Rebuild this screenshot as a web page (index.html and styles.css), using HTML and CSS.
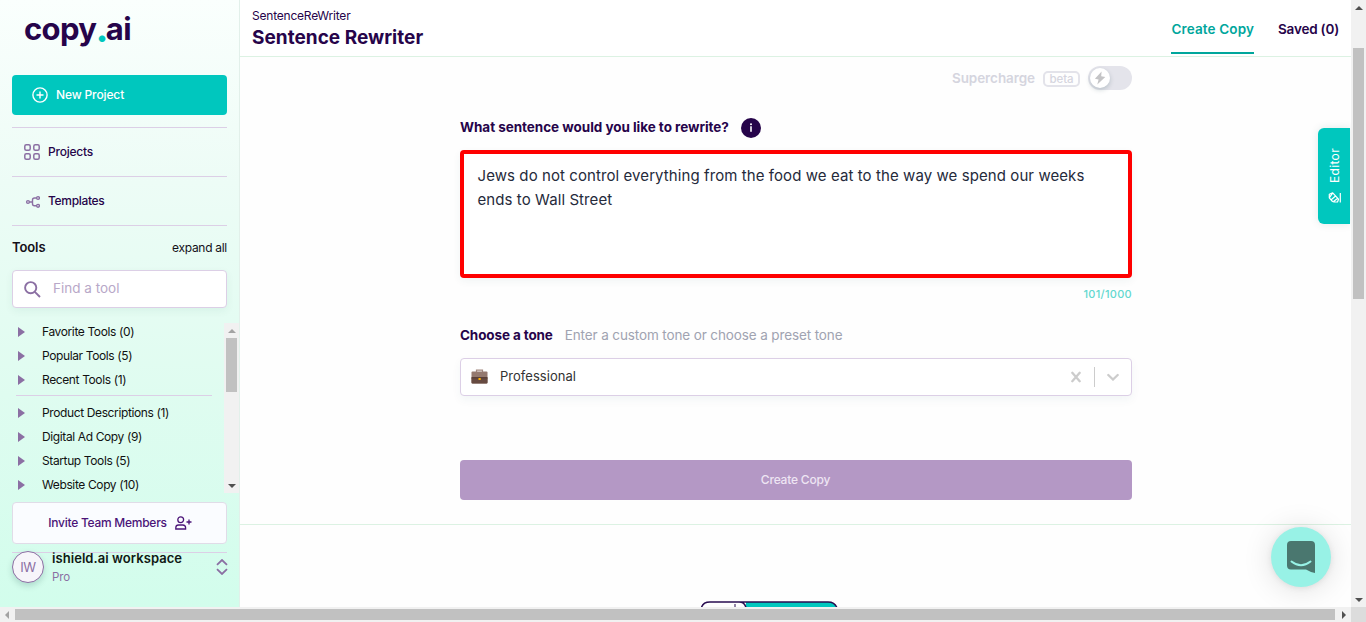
FILE: index.html
```
<!DOCTYPE html>
<html lang="en">
<head>
<meta charset="utf-8">
<title>Sentence Rewriter</title>
<link rel="stylesheet" href="styles.css">
</head>
<body>
<div class="app">
  <aside class="sidebar">
    <div class="logo">copy<span class="logo-dot">.</span>ai</div>
    <button class="new-project">
      <svg width="16" height="16" viewBox="0 0 16 16" fill="none" stroke="#fff" stroke-width="1.4"><circle cx="8" cy="8" r="7.1"/><path d="M8 4.5v7M4.500 8h7"/></svg>
      <span>New Project</span>
    </button>
    <nav class="nav">
      <a class="nav-item nav-projects">
        <svg width="16" height="16" viewBox="0 0 16 16" fill="none" stroke="#8b6fa3" stroke-width="1.5"><rect x=".8" y=".8" width="5.400" height="5.400" rx="1.5"/><rect x="9.800" y=".8" width="5.400" height="5.400" rx="1.5"/><rect x=".8" y="9.800" width="5.400" height="5.400" rx="1.5"/><rect x="9.800" y="9.800" width="5.400" height="5.400" rx="1.5"/></svg>
        <span>Projects</span>
      </a>
      <a class="nav-item nav-templates">
        <svg width="16" height="16" viewBox="0 0 16 16" fill="none" stroke="#8b6fa3" stroke-width="1.400"><circle cx="4" cy="9" r="1.400"/><circle cx="14" cy="5" r="1.400"/><circle cx="14" cy="12.800" r="1.400"/><path d="M5.500 9H8.500M12.500 5h-2Q8.500 5 8.500 7v3.800q0 2 2 2h2"/></svg>
        <span>Templates</span>
      </a>
    </nav>
    <div class="tools-head"><b>Tools</b><span>expand all</span></div>
    <div class="search">
      <svg width="17" height="17" viewBox="0 0 17 17" fill="none" stroke="#8b6fa3" stroke-width="1.900"><circle cx="6.700" cy="6.700" r="5.600"/><path d="M10.800 10.800l5.200 5.200"/></svg>
      <span>Find a tool</span>
    </div>
    <div class="tool-area">
      <ul class="tool-list">
        <li>Favorite Tools (0)</li>
        <li>Popular Tools (5)</li>
        <li class="last-quick">Recent Tools (1)</li>
        <li>Product Descriptions (1)</li>
        <li>Digital Ad Copy (9)</li>
        <li>Startup Tools (5)</li>
        <li>Website Copy (10)</li>
      </ul>
      <div class="vbar tool-bar"><i class="arrow up dim"></i><i class="thumb"></i><i class="arrow down"></i></div>
    </div>
    <button class="invite">
      <span>Invite Team Members</span>
      <svg width="17" height="14" viewBox="0 0 17 14" fill="none" stroke="#4b1478" stroke-width="1.300"><circle cx="5.700" cy="3.700" r="2.900"/><path d="M.8 13v-1.200Q.8 9 3.600 9h4.200q2.800 0 2.800 2.800V13zM14 3.500v5M11.500 6h5"/></svg>
    </button>
    <div class="workspace">
      <div class="avatar">IW</div>
      <div class="ws-text"><b>ishield.ai workspace</b><span>Pro</span></div>
      <svg width="12" height="16" viewBox="0 0 12 16" fill="none" stroke="#8b6fa3" stroke-width="1.800"><path d="M1 5.800L6 1l5 4.800M1 10.200L6 15l5-4.800"/></svg>
    </div>
  </aside>

  <main class="main">
    <header class="topbar">
      <div class="title"><span>SentenceReWriter</span><h1>Sentence Rewriter</h1></div>
      <div class="tabs"><a class="tab active">Create Copy</a><a class="tab saved">Saved (0)</a></div>
    </header>
    <section class="form">
      <div class="supercharge">
        <b>Supercharge</b><span class="beta">beta</span>
        <div class="toggle"><div class="knob"><svg width="12" height="14" viewBox="0 0 12 14" fill="#c4c4c6"><path d="M7.600.6L.9 7.700 4.600 8.500 3.300 13.400 11.300 6 7.200 5.200z"/></svg></div></div>
      </div>
      <div class="question"><b>What sentence would you like to rewrite?</b><span class="info"><svg width="20" height="20" viewBox="0 0 20 20" fill="#fff"><circle cx="10" cy="6.200" r="1"/><path d="M9.200 8.300h1.600v5.500H9.200z"/></svg></span></div>
      <div class="textarea">Jews do not control everything from the food we eat to the way we spend our weeks<br>ends to Wall Street</div>
      <div class="count">101/1000</div>
      <div class="tone-head"><b>Choose a tone</b><span>Enter a custom tone or choose a preset tone</span></div>
      <div class="select">
        <svg width="18" height="16" viewBox="0 0 18 16"><path d="M5.500 3V1.200h6V3" fill="none" stroke="#a1887f" stroke-width="1.200"/><rect x=".5" y="2.500" width="16" height="12" rx="1" fill="#94796f"/><path d="M.5 9h16v4.500q0 1-1 1h-14q-1 0-1-1z" fill="#664a41"/><path d="M.5 8h16v1.500H.5z" fill="#5a4038"/><rect x="7.500" y="9" width="2.200" height="2" fill="#ffb300"/></svg>
        <span class="value">Professional</span>
        <svg class="clear" width="10" height="12" viewBox="0 0 10 12" fill="none" stroke="#ccc" stroke-width="2.300" stroke-linecap="round"><path d="M1.300 1.800l7.400 8.400M8.700 1.800L1.300 10.200"/></svg>
        <i class="sep"></i>
        <svg class="chev" width="12" height="8" viewBox="0 0 12 8" fill="none" stroke="#ccc" stroke-width="2.300" stroke-linecap="round"><path d="M1.300 2L6 6.500 10.700 2"/></svg>
      </div>
      <button class="create"><span>Create Copy</span></button>
    </section>
    <section class="results">
      <svg width="138" height="6" viewBox="0 0 138 6"><path d="M45 1h82q7 0 8 5H45z" fill="#00c7be"/><path d="M.500 6.500Q2 1 9 1H127q7 0 9 6M34 1h4q6 0 7 6" fill="none" stroke="#280c50" stroke-width="1.500"/><path d="M34 3v3" stroke="#280c50"/></svg>
    </section>
    <div class="editor-tab">
      <svg width="13" height="13" viewBox="0 0 13 13" fill="none" stroke="#fff" stroke-width="1.200" stroke-linejoin="round"><path d="M4.500 10.500L1.300 6.800V3.200L4.700 1.800 10.500 8.200 9.500 11H6zM1.300 6.800L4.700 1.800M3.500 8.500L7.300 5.300M5.500 10.500L9.500 7.500M12.300 2v9.500"/></svg>
      <span>Editor</span>
    </div>
    <div class="chat"><svg width="28" height="32" viewBox="0 0 28 32"><path d="M4 0h20q4 0 4 4v28q-5-1-9-3.500H4q-4 0-4-4V4q0-4 4-4z" fill="#4a776f"/><path d="M4.500 20.500q9.500 7.500 19 0" fill="none" stroke="#98f2e6" stroke-width="2" stroke-linecap="round"/></svg></div>
  </main>

  <div class="vbar page-bar"><i class="arrow up"></i><i class="thumb"></i><i class="arrow down"></i></div>
  <div class="hbar"><i class="arrow left"></i><i class="hthumb"></i><i class="arrow right"></i></div>
  <div class="corner"></div>
</div>
</body>
</html>
```
FILE: styles.css
```
* { box-sizing: border-box; }
body { margin: 0; overflow: hidden; font-family: Inter, "Liberation Sans", sans-serif; font-size: 12px; color: #26044a; }
button { font: inherit; margin: 0; border: 0; }
svg { display: block; flex: none; }
b { font-weight: 600; }

.app { display: grid; grid-template: 607px 15px / 240px 1111px 15px; width: 1366px; height: 622px; }

/* Sidebar */
.sidebar { display: flex; flex-direction: column; padding: 0 12px; border-right: 1px solid #e2f0ea; background: linear-gradient(180deg, #fafffd 0%, #edfcf6 30%, #dffcf0 65%, #d2fdec 100%); overflow: hidden; }
.logo { display: flex; height: 75px; padding: 10px 0 0 12px; font-size: 31px; line-height: 38px; font-weight: 700; letter-spacing: -.65px; color: #26044a; }
.logo-dot { width: 9.500px; color: #00c7be; font-size: 39px; text-indent: -.8px; line-height: 36px; }
.new-project { display: flex; align-items: center; gap: 8px; height: 40px; padding: 0 20px; border-radius: 4px; background: #00c7be; color: #fff; font-weight: 500; letter-spacing: -.13px; }
.nav { margin-top: 12px; }
.nav-item { display: flex; align-items: center; gap: 8px; height: 49px; padding-left: 12px; border-top: 1px solid #dccfe6; font-weight: 500; letter-spacing: -.23px; }
.nav-item span, .new-project span, .create span { padding-bottom: 2px; }
.nav-templates { letter-spacing: -.32px; border-bottom: 1px solid #dccfe6; height: 50px; }
.tools-head { display: flex; justify-content: space-between; align-items: center; height: 44px; padding-bottom: 2px; color: #141019; }
.tools-head b { font-size: 13px; letter-spacing: -.1px; }
.tools-head span { letter-spacing: -.29px; }
.search { display: flex; align-items: center; gap: 12px; height: 38px; flex: none; padding-left: 11px; border: 1px solid #dccfe6; border-radius: 4px; background: #fff; color: #b8a8c8; font-size: 13.5px; box-shadow: 0 3px 8px rgba(0, 80, 70, .06); }
.search span { padding-bottom: 2px; }
.tool-area { display: flex; justify-content: space-between; height: 171px; margin: 15px -11px 0 0; flex: none; }
.tool-list { list-style: none; margin: 0; padding: 0 0 0 4px; width: 200px; overflow: hidden; color: #111; letter-spacing: -.38px; }
.tool-list li { display: flex; align-items: center; height: 24px; transform: translateY(-4px); }
.tool-list li::before { content: ""; border-left: 7px solid #8b6fa3; border-top: 5px solid transparent; border-bottom: 5px solid transparent; margin: 1px 17px 0 2px; }
.tool-list .last-quick { height: 29px; padding-bottom: 4px; margin-bottom: 4px; border-bottom: 1px solid #dccfe6; }
.invite { display: flex; align-items: center; justify-content: center; gap: 8px; height: 42px; margin-top: 8px; padding: 0 5px 0 6px; flex: none; border: 1px solid #e0dce8; border-radius: 4px; background: #fafcff; color: #4b1478; font-weight: 500; letter-spacing: -.26px; }
.invite span { padding-bottom: 1px; }
.workspace { display: flex; height: 45px; margin-top: 8px; border-top: 1px solid #dccfe6; }
.avatar { display: grid; place-items: center; width: 32px; height: 32px; margin: -2px 8px 0 0; border: 1px solid #8b6fa3; border-radius: 50%; background: #f7f5fa; color: #8b6fa3; font-size: 13px; letter-spacing: -.3px; box-shadow: 0 3px 6px rgba(0, 60, 60, .18); }
.ws-text { flex: 1; display: flex; flex-direction: column; color: #101814; }
.ws-text b { font-size: 13px; line-height: 12px; margin-top: -1px; letter-spacing: .06px; }
.ws-text span { margin-top: 5px; color: #8b6fa3; line-height: 16px; font-size: 11.5px; letter-spacing: -.1px; }
.workspace > svg { margin: 6px -1px 0 0; }

/* Main panel */
.main { position: relative; display: flex; flex-direction: column; background: #fff; overflow: hidden; }
.topbar { display: flex; justify-content: space-between; height: 57px; flex: none; padding: 0 12px; border-bottom: 1px solid #dcf2e3; }
.title { padding-top: 8px; line-height: 16px; letter-spacing: -.21px; }
.title h1 { margin: 2px 0 0; font-size: 19px; font-weight: 700; line-height: 24px; letter-spacing: .02px; }
.tabs { display: flex; gap: 24px; font-size: 13.5px; font-weight: 600; }
.tab { height: 54px; line-height: 59px; }
.active { color: #00a69c; border-bottom: 2px solid #00a69c; letter-spacing: .13px; }
.saved { letter-spacing: -.2px; }
.form { height: 468px; padding: 9px 219px 0 220px; background: #fefefe; border-bottom: 1px solid #dcf2e3; flex: none; }
.supercharge { display: flex; justify-content: flex-end; align-items: center; height: 24px; color: #d5d5de; font-size: 13.5px; letter-spacing: -.08px; }
.beta { margin: 1px 8px 0; width: 37px; height: 16px; border: 2px solid #e3e3ea; border-radius: 5px; font-size: 11.5px; font-weight: 500; line-height: 12px; text-align: center; }
.toggle { width: 44px; height: 24px; padding: 2px; border-radius: 12px; background: #e4e4eb; }
.knob { display: grid; place-items: center; width: 20px; height: 20px; border-radius: 50%; background: #fff; box-shadow: 0 2px 5px rgba(0, 50, 60, .2); }
.question { display: flex; align-items: center; gap: 12px; height: 20px; margin-top: 28px; font-size: 13.5px; letter-spacing: -.04px; }
.question b, .tone-head b { font-weight: 700; }
.question b { padding-bottom: 2px; }
.info { width: 20px; height: 20px; border-radius: 50%; background: #26044a; }
.textarea { height: 128px; margin-top: 12px; padding: 10px 13.5px; border: 4px solid #f00; border-radius: 4px; background: #fff; color: #252a3b; font-size: 15px; line-height: 24px; letter-spacing: .083px; white-space: nowrap; box-shadow: 0 3px 8px rgba(0, 80, 90, .06); }
.count { height: 32px; line-height: 32px; text-align: right; color: #62d8cf; font-size: 11px; font-weight: 500; letter-spacing: .3px; }
.tone-head { display: flex; align-items: center; gap: 12px; height: 20px; margin-top: 16px; padding-bottom: 2px; font-size: 13.5px; letter-spacing: -.12px; }
.tone-head span { color: #a0a3b1; }
.select { display: flex; align-items: center; height: 38px; margin-top: 12px; padding: 0 12px 0 10px; border: 1px solid #dccfe6; border-radius: 4px; background: #fff; box-shadow: 0 4px 10px rgba(0, 80, 90, .05); }
.value { flex: 1; margin-left: 11px; padding-bottom: 2px; color: #333; font-size: 13px; letter-spacing: .03px; }
.sep { width: 1px; height: 20px; margin: 0 12px 0 13px; background: #ccc; }
.create { display: block; width: 672px; height: 40px; margin-top: 64px; padding: 0 1px 2px 0; border-radius: 4px; background: #b498c5; color: #eee5f3; font-weight: 500; letter-spacing: -.2px; }
.results { flex: 1; display: flex; align-items: flex-end; padding-left: 461px; background: #fefefe; }

/* Floating controls over the panel */
.editor-tab { position: absolute; right: 1px; top: 128px; width: 32px; height: 96px; display: flex; flex-direction: column-reverse; align-items: center; justify-content: center; gap: 8px; border-radius: 6px 0 0 6px; background: #00c7be; color: #fff; font-size: 12px; box-shadow: 0 0 8px rgba(0, 80, 80, .12); }
.editor-tab span { writing-mode: vertical-rl; transform: rotate(180deg); letter-spacing: .35px; }
.chat { position: absolute; right: 20px; top: 527px; width: 60px; height: 60px; display: grid; place-items: center; border-radius: 50%; background: #98f2e6; box-shadow: 0 1px 6px rgba(0, 0, 0, .08), 0 2px 30px rgba(0, 0, 0, .13); }

/* Scroll bars */
.vbar { display: flex; flex-direction: column; align-items: center; justify-content: space-between; background: #f1f1f1; }
.vbar .thumb { width: 11px; background: #c1c1c1; }
.tool-bar { width: 15px; height: 170px; padding: 6px 0 5px; margin-right: -1px; }
.tool-bar .thumb { height: 54px; margin: 5px 0 auto; }
.page-bar { padding: 6px 0 5px; }
.page-bar .thumb { height: 251px; margin: 38px 0 auto; }
.arrow { border: 4px solid transparent; width: 0; height: 0; }
.up { border-top: 0; border-bottom-color: #505050; }
.down { border-bottom: 0; border-top-color: #505050; }
.left { border-left: 0; border-right-color: #a3a3a3; }
.right { border-right: 0; border-left-color: #505050; }
.dim { border-bottom-color: #a3a3a3; }
.hbar { grid-column: 1 / 3; display: flex; align-items: center; padding: 0 5px; background: #f1f1f1; }
.hthumb { width: 1320px; height: 11px; margin: 0 auto 0 6px; background: #c1c1c1; }
.corner { background: #dcdcdc; }
```
